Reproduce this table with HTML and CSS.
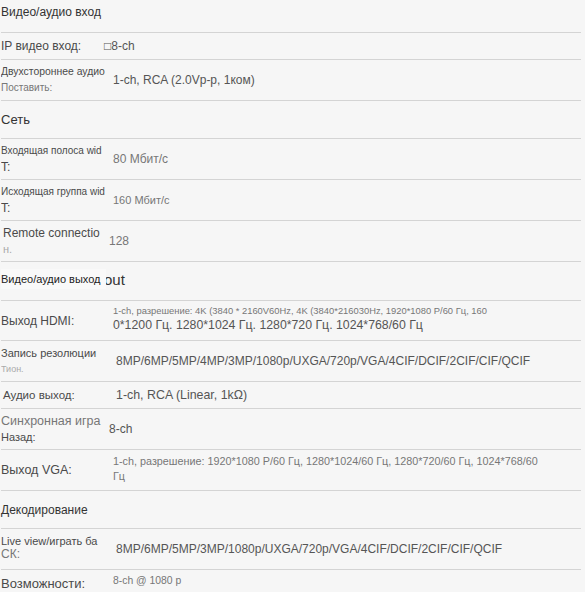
FILE: index.html
```html
<!DOCTYPE html>
<html lang="ru">
<head>
    <meta charset="UTF-8">
    <title>Характеристики</title>
    <link rel="stylesheet" href="styles.css">
</head>
<body>
    <div class="specs">
        <div class="group g-first"><span class="t-12">Видео/аудио вход</span></div>

        <div class="row h27">
            <div class="label"><span class="t-12">IP видео вход:</span></div>
            <div class="value v-flush"><span class="t-12">&#9633;8-ch</span></div>
        </div>
        <div class="row">
            <div class="label"><span class="t-10-4">Двухстороннее аудио</span><span class="t-10 dim">Поставить:</span></div>
            <div class="value"><span class="t-12">1-ch, RCA (2.0Vp-p, 1ком)</span></div>
        </div>

        <div class="group"><span class="t-13">Сеть</span></div>

        <div class="row">
            <div class="label"><span class="t-10">Входящая полоса wid</span><span class="t-12">T:</span></div>
            <div class="value"><span class="t-12 dim">80 Мбит/с</span></div>
        </div>
        <div class="row">
            <div class="label"><span class="t-10">Исходящая группа wid</span><span class="t-12">T:</span></div>
            <div class="value"><span class="t-11 dim">160 Мбит/с</span></div>
        </div>
        <div class="row">
            <div class="label indent"><span class="t-12">Remote connectio</span><span class="t-11 faint">н.</span></div>
            <div class="value v-tight"><span class="t-12 dim">128</span></div>
        </div>

        <div class="group h39">
            <span class="t-11 strong cover">Видео/аудио выход</span>
            <span class="t-15 out">out</span>
        </div>

        <div class="row h40">
            <div class="label"><span class="t-12">Выход HDMI:</span></div>
            <div class="value two-line">
                <span class="t-9-4 dim">1-ch, разрешение: 4K (3840 * 2160V60Hz, 4K (3840*216030Hz, 1920*1080 P/60 Гц, 160</span>
                <span class="t-12-3">0*1200 Гц. 1280*1024 Гц. 1280*720 Гц. 1024*768/60 Гц</span>
            </div>
        </div>
        <div class="row">
            <div class="label"><span class="t-11">Запись резолюции</span><span class="t-9 faint">Тион.</span></div>
            <div class="value v-wide"><span class="t-12">8MP/6MP/5MP/4MP/3MP/1080p/UXGA/720p/VGA/4CIF/DCIF/2CIF/CIF/QCIF</span></div>
        </div>
        <div class="row h27">
            <div class="label indent"><span class="t-11-5">Аудио выход:</span></div>
            <div class="value v-wide"><span class="t-12-4">1-ch, RCA (Linear, 1kΩ)</span></div>
        </div>
        <div class="row">
            <div class="label"><span class="t-12-5 dim">Синхронная игра</span><span class="t-11">Назад:</span></div>
            <div class="value v-tight"><span class="t-12">8-ch</span></div>
        </div>
        <div class="row">
            <div class="label"><span class="t-12-5">Выход VGA:</span></div>
            <div class="value vga">
                <span class="t-10-8 dim">1-ch, разрешение: 1920*1080 P/60 Гц, 1280*1024/60 Гц, 1280*720/60 Гц, 1024*768/60</span>
                <span class="t-10-8 dim">Гц</span>
            </div>
        </div>

        <div class="group"><span class="t-12">Декодирование</span></div>

        <div class="row">
            <div class="label tight"><span class="t-11">Live view/играть ба</span><span class="t-12 dim">СК:</span></div>
            <div class="value v-wide"><span class="t-12">8MP/6MP/5MP/3MP/1080p/UXGA/720p/VGA/4CIF/DCIF/2CIF/CIF/QCIF</span></div>
        </div>
        <div class="row last">
            <div class="label"><span class="t-13">Возможности:</span></div>
            <div class="value up"><span class="t-10-4 dim">8-ch @ 1080 p</span></div>
        </div>
    </div>
</body>
</html>
```

FILE: styles.css
```css
* { box-sizing: border-box; }
body {
    margin: 0;
    background-color: #f6f6f6;
    font-family: 'Liberation Sans', Arial, sans-serif;
    color: #4a4a4a;
}
.specs { padding: 0 4px 0 1px; }

.group {
    height: 38px;
    display: flex;
    align-items: center;
    border-bottom: 1px solid #d4d4d4;
    color: #333;
}
.group.g-first { height: 33px; padding-bottom: 8px; }
.group.h39 { height: 39px; padding-bottom: 4px; }
.group .cover {
    position: relative;
    z-index: 1;
    width: 105px;
    padding: 4px 0;
    background-color: #f9f9f9;
}
.group .out { margin-left: -2px; color: #333; }

.row {
    display: grid;
    grid-template-columns: 105px 1fr;
    height: 41px;
    border-bottom: 1px solid #d4d4d4;
}
.row.h27 { height: 27px; }
.row.h40 { height: 40px; }
.row.last { height: 28px; border-bottom: none; }

.label {
    display: flex;
    flex-direction: column;
    justify-content: center;
    line-height: 16px;
    white-space: nowrap;
    overflow: hidden;
}
.label.indent { padding-left: 2px; }
.label.tight { line-height: 13px; padding-bottom: 2px; }

.value {
    display: flex;
    flex-direction: column;
    justify-content: center;
    padding-left: 7px;
    line-height: 15px;
    color: #555;
    white-space: nowrap;
}
.value.two-line { line-height: 14px; padding-bottom: 5px; }
.value.vga { padding-bottom: 2px; }
.value.v-flush { padding-left: 0; margin-left: -2px; }
.value.v-tight { padding-left: 3px; }
.value.v-wide { padding-left: 10px; }
.value.up { padding-bottom: 8px; }

.t-9 { font-size: 9px; }
.t-9-4 { font-size: 9.4px; }
.t-10 { font-size: 10px; }
.t-10-4 { font-size: 10.4px; }
.t-10-8 { font-size: 10.8px; }
.t-11 { font-size: 11px; }
.t-11-5 { font-size: 11.5px; }
.t-12 { font-size: 12px; }
.t-12-3 { font-size: 12.3px; }
.t-12-4 { font-size: 12.4px; }
.t-12-5 { font-size: 12.5px; }
.t-13 { font-size: 13px; }
.t-15 { font-size: 15px; }

.strong { color: #222; }
.dim { color: #777; }
.faint { color: #aaa; }
```
